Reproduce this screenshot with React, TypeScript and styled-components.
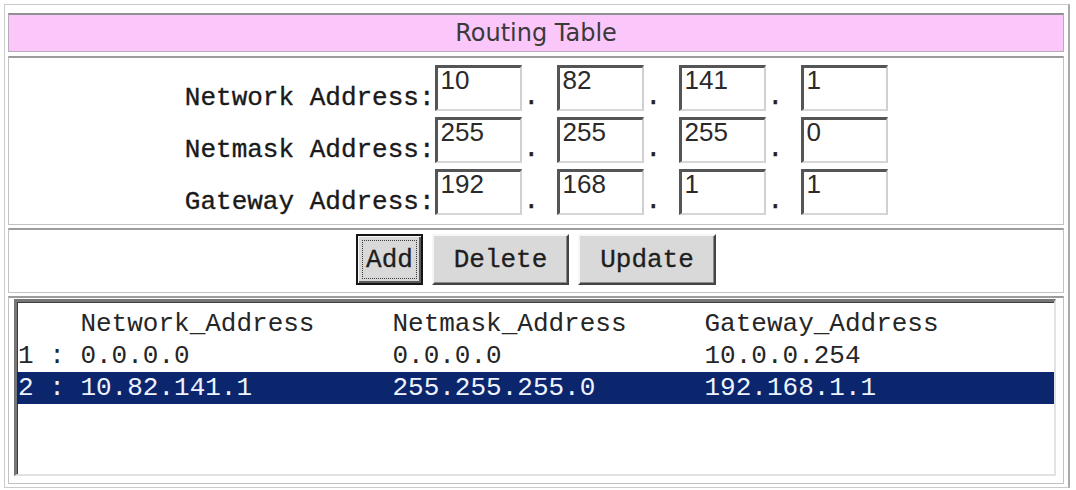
import React from "react";
import styled, { createGlobalStyle } from "styled-components";

const Global = createGlobalStyle`
  html, body { margin: 0; padding: 0; background: #ffffff; }
  body { font-family: "Liberation Mono", "Courier New", monospace; }
`;

const Page = styled.div`
  padding: 4px 0 0 4px;
`;

const Frame = styled.div`
  width: 1066px;
  height: 484px;
  box-sizing: border-box;
  border: 1px solid #cacaca;
  border-right: 2px solid #a9a9a9;
  padding: 8px 4px 3px 3px;
  display: flex;
  flex-direction: column;
  gap: 3px;
`;

const TitleBar = styled.div`
  height: 39px;
  box-sizing: border-box;
  margin-bottom: 1px;
  background: #fbc7fa;
  border: 1px solid #b9a9b9;
  border-top: 2px solid #909090;
  display: flex;
  align-items: center;
  justify-content: center;
  font-family: "DejaVu Sans", Verdana, sans-serif;
  font-size: 24px;
  color: #3a3a3a;
`;

const Panel = styled.div`
  box-sizing: border-box;
  background: #ffffff;
  border: 1px solid #c2c2c2;
  border-top: 2px solid #9c9c9c;
`;

const FormPanel = styled(Panel)`
  height: 169px;
  padding: 7px 0 0;
  display: flex;
  flex-direction: column;
  align-items: center;
  gap: 6px;
`;

const FieldRow = styled.div`
  display: flex;
  align-items: flex-end;
`;

const FieldLabel = styled.label`
  width: 250px;
  text-align: right;
  font-size: 26px;
  line-height: 22px;
  margin-bottom: 2px;
  color: #1a1a1a;
  white-space: pre;
  -webkit-text-stroke: 0.35px #1a1a1a;
`;

const Octet = styled.input`
  width: 87px;
  height: 46px;
  box-sizing: border-box;
  margin: 0;
  padding: 0 4px 17px 3px;
  border-style: solid;
  border-width: 3px 2px 2px 3px;
  border-color: #555555 #d0d0d0 #d6d6d6 #555555;
  background: #ffffff;
  font-family: "Liberation Sans", Arial, sans-serif;
  font-size: 26px;
  line-height: 24px;
  color: #2a2a2a;
  outline: none;
`;

const Dot = styled.span`
  width: 35px;
  box-sizing: border-box;
  padding-left: 2px;
  font-size: 26px;
  line-height: 22px;
  margin-bottom: 3px;
  color: #1e1e1e;
  -webkit-text-stroke: 0.4px #1e1e1e;
`;

const ButtonPanel = styled(Panel)`
  height: 65px;
  padding-top: 4px;
  display: flex;
  justify-content: center;
  align-items: flex-start;
  gap: 9px;
`;

const Button = styled.button<{ $width: number; $focused?: boolean }>`
  width: ${(p) => p.$width}px;
  height: 51px;
  box-sizing: border-box;
  margin: 0;
  padding: 0;
  display: flex;
  align-items: center;
  justify-content: center;
  background: #d9d9d9;
  border-style: solid;
  border-width: 2px;
  border-color: ${(p) =>
    p.$focused ? "#151515" : "#f6f6f6 #444444 #444444 #f6f6f6"};
  box-shadow: ${(p) =>
    p.$focused
      ? "inset 1px 1px #f6f6f6, inset -2px -2px #5a5a5a"
      : "inset -1px -1px #8a8a8a"};
  font-family: "Liberation Mono", "Courier New", monospace;
  font-size: 26px;
  color: #1e1e1e;
  -webkit-text-stroke: 0.3px #1e1e1e;
  cursor: default;
`;

const FocusRing = styled.span`
  padding: 6px 3px 5px;
  border: 1px dotted #3a3a3a;
  line-height: 26px;
`;

const ListPanel = styled(Panel)`
  flex: 1;
  padding: 1px 7px 7px 5px;
  display: flex;
`;

const ListBox = styled.div`
  flex: 1;
  box-sizing: border-box;
  background: #ffffff;
  border-style: solid;
  border-width: 3px 2px 2px 3px;
  border-color: #767676 #e2e2e2 #e2e2e2 #767676;
  box-shadow: inset 1px 1px #3c3c3c;
  padding-top: 6px;
  font-family: "Liberation Mono", "Courier New", monospace;
  font-size: 26px;
  line-height: 32px;
  color: #262626;
`;

const ListLine = styled.div<{ $selected?: boolean }>`
  padding-left: 1px;
  white-space: pre;
  background: ${(p) => (p.$selected ? "#0b266c" : "transparent")};
  color: ${(p) => (p.$selected ? "#eef3ff" : "#262626")};
`;

type Field = { label: string; octets: string[] };

const fields: Field[] = [
  { label: "Network Address:", octets: ["10", "82", "141", "1"] },
  { label: "Netmask Address:", octets: ["255", "255", "255", "0"] },
  { label: "Gateway Address:", octets: ["192", "168", "1", "1"] },
];

type Route = { net: string; mask: string; gw: string };

const routes: Route[] = [
  { net: "0.0.0.0", mask: "0.0.0.0", gw: "10.0.0.254" },
  { net: "10.82.141.1", mask: "255.255.255.0", gw: "192.168.1.1" },
];

const header =
  "    Network_Address".padEnd(24) + "Netmask_Address".padEnd(20) + "Gateway_Address";

const formatRoute = (r: Route, i: number) =>
  `${i + 1} : ${r.net}`.padEnd(24) + r.mask.padEnd(20) + r.gw;

export default function App() {
  return (
    <>
      <Global />
      <Page>
        <Frame>
          <TitleBar>Routing Table</TitleBar>
          <FormPanel>
            {fields.map((f) => (
              <FieldRow key={f.label}>
                <FieldLabel>{f.label}</FieldLabel>
                {f.octets.map((o, i) => (
                  <React.Fragment key={i}>
                    {i > 0 && <Dot>.</Dot>}
                    <Octet defaultValue={o} />
                  </React.Fragment>
                ))}
              </FieldRow>
            ))}
          </FormPanel>
          <ButtonPanel>
            <Button $width={67} $focused>
              <FocusRing>Add</FocusRing>
            </Button>
            <Button $width={137}>Delete</Button>
            <Button $width={138}>Update</Button>
          </ButtonPanel>
          <ListPanel>
            <ListBox>
              <ListLine>{header}</ListLine>
              {routes.map((r, i) => (
                <ListLine key={i} $selected={i === 1}>
                  {formatRoute(r, i)}
                </ListLine>
              ))}
            </ListBox>
          </ListPanel>
        </Frame>
      </Page>
    </>
  );
}
